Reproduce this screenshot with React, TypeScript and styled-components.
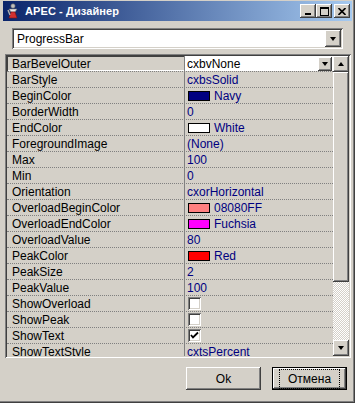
import React from 'react'
import styled, { createGlobalStyle } from 'styled-components'

const GlobalStyle = createGlobalStyle`
  body {
    margin: 0;
    background: #d4d0c8;
    font-family: 'Liberation Sans', Arial, sans-serif;
    font-size: 11px;
  }
`

const FACE = '#d4d0c8'

const raised = `
  box-shadow: inset -1px -1px #404040, inset 1px 1px #ffffff,
    inset -2px -2px #808080, inset 2px 2px ${FACE};
`

const sunken = `
  box-shadow: inset 1px 1px #808080, inset -1px -1px #ffffff,
    inset 2px 2px #404040, inset -2px -2px ${FACE};
`

const Window = styled.div`
  width: 355px;
  height: 403px;
  box-sizing: border-box;
  padding: 1px 3px 3px 3px;
  background: ${FACE};
  display: flex;
  flex-direction: column;
  box-shadow: inset -1px -1px #404040, inset -2px -2px #808080;
`

const TitleBar = styled.div`
  height: 20px;
  display: flex;
  align-items: center;
  gap: 4px;
  padding: 0 2px 0 2px;
  background: linear-gradient(to right, #0a246a, #a6caf0);
`

const TitleText = styled.span`
  color: #fff;
  font-weight: bold;
  font-size: 11px;
  letter-spacing: 0.1px;
`

const TitleButtons = styled.div`
  margin-left: auto;
  display: flex;
  align-items: center;
`

const CaptionButton = styled.div<{ $gap?: boolean }>`
  width: 16px;
  height: 14px;
  margin-left: ${p => (p.$gap ? 2 : 0)}px;
  background: ${FACE};
  ${raised}
  display: flex;
  align-items: center;
  justify-content: center;
`

const Client = styled.div`
  flex: 1;
  display: flex;
  flex-direction: column;
`

const Combo = styled.div`
  margin: 7px 0 0 9px;
  width: 331px;
  height: 21px;
  box-sizing: border-box;
  background: #fff;
  ${sunken}
  display: flex;
  align-items: center;
  padding: 2px 2px 2px 5px;
  font-size: 12px;
`

const ComboText = styled.span`
  flex: 1;
`

const DropButton = styled.div<{ $w?: number; $h?: number }>`
  width: ${p => p.$w ?? 16}px;
  height: ${p => p.$h ?? 17}px;
  box-sizing: border-box;
  background: ${FACE};
  ${raised}
  display: flex;
  align-items: center;
  justify-content: center;
`

const Arrow = styled.div<{ $up?: boolean }>`
  width: 0;
  height: 0;
  border-left: 3.5px solid transparent;
  border-right: 3.5px solid transparent;
  ${p => (p.$up ? 'border-bottom' : 'border-top')}: 4px solid #000;
`

const Grid = styled.div`
  margin: 5px 0 0 2px;
  width: 346px;
  height: 304px;
  box-sizing: border-box;
  padding: 2px;
  ${sunken}
  display: flex;
  overflow: hidden;
`

const Rows = styled.div`
  flex: 1;
  display: flex;
  flex-direction: column;
  overflow: hidden;
`

const Row = styled.div`
  height: 16px;
  flex-shrink: 0;
  display: grid;
  grid-template-columns: 178px 1fr;
  box-sizing: border-box;
  border-bottom: 1px dotted #808080;
`

const NameCell = styled.div<{ $selected?: boolean }>`
  padding-left: 5px;
  display: flex;
  align-items: center;
  border-right: 1px solid #808080;
  color: #000;
  font-size: 12px;
  white-space: nowrap;
  ${p =>
    p.$selected &&
    `
    box-shadow: inset 1px 1px #404040, inset 0 -1px #ffffff;
  `}
`

const ValueCell = styled.div<{ $edit?: boolean }>`
  padding-left: 2px;
  display: flex;
  align-items: center;
  gap: 4px;
  color: #000080;
  font-size: 12px;
  white-space: nowrap;
  background: ${p => (p.$edit ? '#fff' : 'transparent')};
  ${p => p.$edit && 'color: #000; padding-right: 1px;'}
`

const EditText = styled.span`
  flex: 1;
`

const Swatch = styled.span<{ $color: string }>`
  width: 20px;
  height: 8px;
  margin-left: 1px;
  border: 1px solid #000;
  background: ${p => p.$color};
`

const Check = styled.span`
  width: 13px;
  height: 13px;
  box-sizing: border-box;
  margin-left: 1px;
  background: #fff;
  ${sunken}
  display: flex;
  align-items: center;
  justify-content: center;
`

const ScrollBar = styled.div`
  width: 16px;
  display: flex;
  flex-direction: column;
`

const Thumb = styled.div`
  height: 210px;
  background: ${FACE};
  ${raised}
`

const Track = styled.div`
  flex: 1;
  background: repeating-conic-gradient(#ffffff 0 25%, ${FACE} 0 50%) 0 0 / 2px 2px;
`

const ButtonRow = styled.div`
  display: flex;
  justify-content: flex-end;
  gap: 11px;
  padding: 9px 5px 0 0;
`

const Button = styled.div<{ $default?: boolean }>`
  width: 75px;
  height: 23px;
  box-sizing: border-box;
  background: ${FACE};
  display: flex;
  align-items: center;
  justify-content: center;
  font-size: 12px;
  ${p =>
    p.$default
      ? `box-shadow: inset 0 0 0 1px #000, inset -2px -2px #404040, inset 2px 2px #ffffff, inset -3px -3px #808080;`
      : raised}
`

const Focus = styled.span`
  border: 1px dotted #000;
  padding: 2px 8px;
  width: 61px;
  box-sizing: border-box;
  text-align: center;
`

type Prop = {
  name: string
  value?: string
  color?: string
  check?: boolean
  edit?: boolean
}

const props: Prop[] = [
  { name: 'BarBevelOuter', value: 'cxbvNone', edit: true },
  { name: 'BarStyle', value: 'cxbsSolid' },
  { name: 'BeginColor', value: 'Navy', color: '#000080' },
  { name: 'BorderWidth', value: '0' },
  { name: 'EndColor', value: 'White', color: '#ffffff' },
  { name: 'ForegroundImage', value: '(None)' },
  { name: 'Max', value: '100' },
  { name: 'Min', value: '0' },
  { name: 'Orientation', value: 'cxorHorizontal' },
  { name: 'OverloadBeginColor', value: '08080FF', color: '#ff8080' },
  { name: 'OverloadEndColor', value: 'Fuchsia', color: '#ff00ff' },
  { name: 'OverloadValue', value: '80' },
  { name: 'PeakColor', value: 'Red', color: '#ff0000' },
  { name: 'PeakSize', value: '2' },
  { name: 'PeakValue', value: '100' },
  { name: 'ShowOverload', check: false },
  { name: 'ShowPeak', check: false },
  { name: 'ShowText', check: true },
  { name: 'ShowTextStyle', value: 'cxtsPercent' },
]

const AppIcon = () => (
  <svg width="16" height="16" viewBox="0 0 16 16">
    <circle cx="8" cy="3" r="2.2" fill="#c0c0c0" stroke="#606060" strokeWidth="0.6" />
    <path d="M4 6 L12 6 L10 9 L6 9 Z" fill="#e8e8e8" stroke="#707070" strokeWidth="0.6" />
    <path d="M6 9 L10 9 L12 15 L4 15 Z" fill="#d03030" stroke="#801010" strokeWidth="0.6" />
    <path d="M3 7 L5 12" stroke="#b0b0b0" strokeWidth="1.4" />
  </svg>
)

const Tick = () => (
  <svg width="9" height="9" viewBox="0 0 9 9">
    <path d="M1 4 L3 6.5 L8 1.5" fill="none" stroke="#000" strokeWidth="1.8" />
  </svg>
)

export default function App() {
  return (
    <>
      <GlobalStyle />
      <Window>
        <TitleBar>
          <AppIcon />
          <TitleText>APEC - Дизайнер</TitleText>
          <TitleButtons>
            <CaptionButton>
              <svg width="8" height="7" viewBox="0 0 8 7">
                <rect x="1" y="5" width="6" height="2" fill="#000" />
              </svg>
            </CaptionButton>
            <CaptionButton>
              <svg width="9" height="9" viewBox="0 0 9 9">
                <rect x="0.5" y="0.5" width="8" height="8" fill="none" stroke="#000" />
                <rect x="0" y="0" width="9" height="2" fill="#000" />
              </svg>
            </CaptionButton>
            <CaptionButton $gap>
              <svg width="8" height="7" viewBox="0 0 8 7">
                <path d="M0.5 0 L7.5 7 M7.5 0 L0.5 7" stroke="#000" strokeWidth="1.6" />
              </svg>
            </CaptionButton>
          </TitleButtons>
        </TitleBar>
        <Client>
          <Combo>
            <ComboText>ProgressBar</ComboText>
            <DropButton>
              <Arrow />
            </DropButton>
          </Combo>
          <Grid>
            <Rows>
              {props.map(p => (
                <Row key={p.name}>
                  <NameCell $selected={p.edit}>{p.name}</NameCell>
                  <ValueCell $edit={p.edit}>
                    {p.color && <Swatch $color={p.color} />}
                    {p.check !== undefined ? (
                      <Check>{p.check && <Tick />}</Check>
                    ) : p.edit ? (
                      <>
                        <EditText>{p.value}</EditText>
                        <DropButton $w={14} $h={14}>
                          <Arrow />
                        </DropButton>
                      </>
                    ) : (
                      p.value
                    )}
                  </ValueCell>
                </Row>
              ))}
            </Rows>
            <ScrollBar>
              <DropButton $h={16}>
                <Arrow $up />
              </DropButton>
              <Thumb />
              <Track />
              <DropButton $h={16}>
                <Arrow />
              </DropButton>
            </ScrollBar>
          </Grid>
          <ButtonRow>
            <Button>Ok</Button>
            <Button $default>
              <Focus>Отмена</Focus>
            </Button>
          </ButtonRow>
        </Client>
      </Window>
    </>
  )
}
